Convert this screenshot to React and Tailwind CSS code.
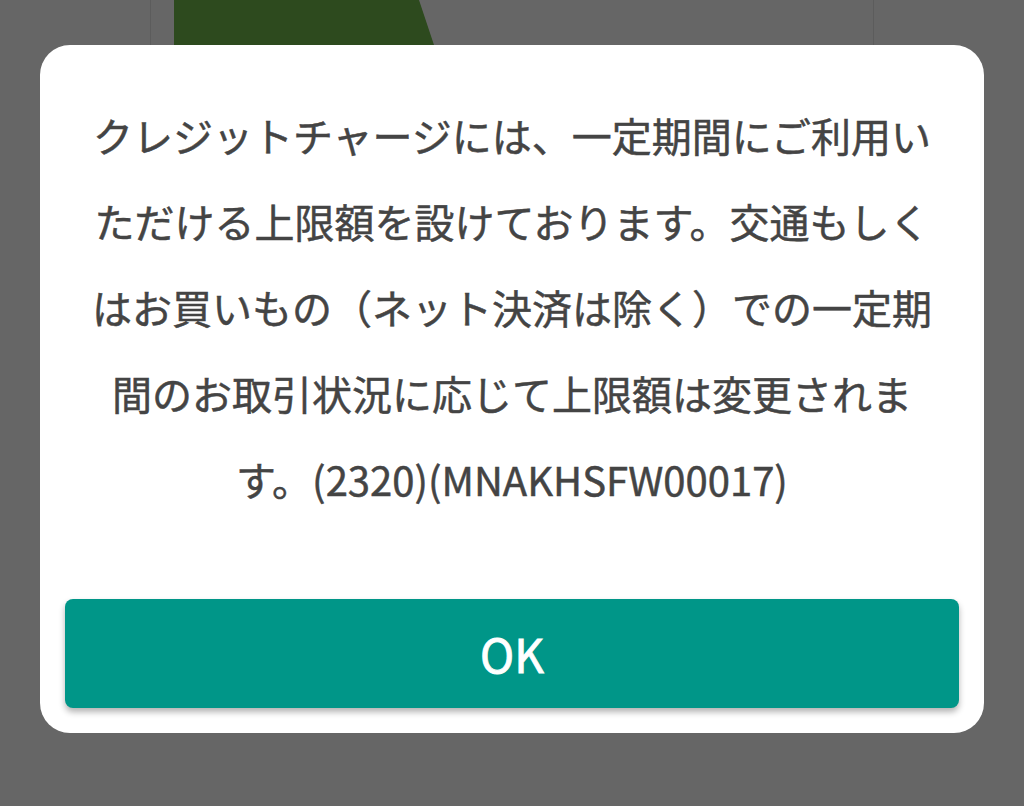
import React from 'react';

const message =
  'クレジットチャージには、一定期間にご利用いただける上限額を設けております。交通もしくはお買いもの（ネット決済は除く）での一定期間のお取引状況に応じて上限額は変更されます。(2320)(MNAKHSFW00017)';

const jp = { fontFamily: '"Noto Sans CJK JP", "Noto Sans", sans-serif' };

// Backdrop page behind the dialog
const Backdrop = () => (
  <div className="absolute inset-0 bg-[#666666]">
    <div className="mx-[150px] h-[120px] border-x border-[#5c5c5c]">
      <div className="ml-[23px] w-[265px] h-[60px] bg-[#2d4a1e] [clip-path:polygon(0_0,245px_0,265px_60px,0_60px)]" />
    </div>
  </div>
);

const ErrorDialog = () => (
  <div className="relative w-[944px] bg-white rounded-[30px] pt-[47px] pb-[25px] px-[25px] flex flex-col">
    <p
      className="px-[17px] text-center text-[40px] leading-[86px] text-[#444444] font-normal [-webkit-text-stroke:0.5px_#444444]"
      style={jp}
    >
      {message}
    </p>
    <button
      className="mt-[77px] h-[109px] w-full rounded-[8px] bg-[#009688] text-white text-[46px] font-normal [-webkit-text-stroke:0.9px_#ffffff] shadow-[0_4px_6px_rgba(0,0,0,0.3)]"
      style={jp}
    >
      OK
    </button>
  </div>
);

export default function App() {
  return (
    <div className="relative w-[1024px] h-[806px] overflow-hidden">
      <Backdrop />
      <div className="relative flex justify-center pt-[45px]">
        <ErrorDialog />
      </div>
    </div>
  );
}
